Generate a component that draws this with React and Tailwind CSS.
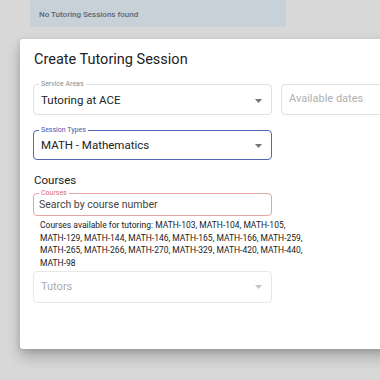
import React from "react";

const Arrow = ({ light }) => (
  <svg width="7" height="4" viewBox="0 0 7 4" className="shrink-0">
    <path d="M0 0h7L3.5 4z" fill={light ? "#c4c4c4" : "#757575"} />
  </svg>
);

const Outlined = ({ label, color = "#e0e0e0", labelColor = "#8a8a8a", width = "w-[239px]", border = "border", children }) => (
  <fieldset className={`${width} ${border} rounded-[4px] pl-[7px] pr-[9px] m-0`} style={{ borderColor: color }}>
    <legend className="px-[2px] -ml-[2px] text-[7px] leading-[8px]" style={{ color: labelColor }}>
      {label}
    </legend>
    {children}
  </fieldset>
);

const helperLines = [
  "Courses available for tutoring: MATH-103, MATH-104, MATH-105,",
  "MATH-129, MATH-144, MATH-146, MATH-165, MATH-166, MATH-259,",
  "MATH-265, MATH-266, MATH-270, MATH-329, MATH-420, MATH-440,",
  "MATH-98",
];

export default function App() {
  return (
    <div
      className="w-[380px] h-[380px] overflow-hidden bg-[#d8d8d8] relative"
      style={{ fontFamily: "Roboto, 'Noto Sans', sans-serif" }}
    >
      {/* page behind the modal */}
      <div className="ml-[30px] w-[256px] h-[27px] bg-[#c8d0d8] flex items-center pl-[9px] pt-[2px]">
        <span className="text-[8px] font-medium text-[#5b6774]">No Tutoring Sessions found</span>
      </div>

      {/* dialog */}
      <div className="ml-[20px] mt-[12px] w-[400px] h-[310px] bg-white rounded-[3px] shadow-[0_8px_14px_rgba(0,0,0,0.22),0_2px_6px_rgba(0,0,0,0.12)] pl-[13px] pt-[11px]">
        <h2 className="text-[14.5px] leading-[20px] text-[#222] font-normal pl-[1px]">Create Tutoring Session</h2>

        <div className="flex items-start gap-[9px] mt-[10px]">
          <Outlined label="Service Areas">
            <div className="h-[26px] flex items-center justify-between pb-[1px]">
              <span className="text-[11.5px] text-[#222]">Tutoring at ACE</span>
              <Arrow />
            </div>
          </Outlined>
          <div className="mt-[4px] w-[120px] h-[31px] border border-[#e0e0e0] rounded-[4px] flex items-center pl-[7px]">
            <span className="text-[11px] text-[#b0b0b0]">Available dates</span>
          </div>
        </div>

        <div className="mt-[11px]">
          <Outlined label="Session Types" color="#5466b8" labelColor="#4557b0" border="border-[1.5px]">
            <div className="h-[25px] flex items-center justify-between pb-[1px]">
              <span className="text-[11.5px] text-[#222]">MATH - Mathematics</span>
              <Arrow />
            </div>
          </Outlined>
        </div>

        <div className="mt-[13px] text-[11.5px] leading-[14px] text-[#222] pl-[1px]">Courses</div>

        <div className="mt-[2px]">
          <Outlined label="Courses" color="#e2a4a4" labelColor="#e06a6a">
            <div className="h-[18px] flex items-center pb-[2px] -ml-[2px]">
              <span className="text-[10.5px] text-[#444]">Search by course number</span>
            </div>
          </Outlined>
        </div>

        <div className="mt-[3px] pl-[7px] text-[8.5px] leading-[12.5px] text-[#222]">
          {helperLines.map(l => (
            <div key={l} className="whitespace-nowrap">{l}</div>
          ))}
        </div>

        <div className="mt-[2px] w-[239px] h-[32px] border border-[#e8e8e8] rounded-[4px] flex items-center justify-between pl-[7px] pr-[9px]">
          <span className="text-[11px] text-[#ababab]">Tutors</span>
          <Arrow light />
        </div>
      </div>
    </div>
  );
}
